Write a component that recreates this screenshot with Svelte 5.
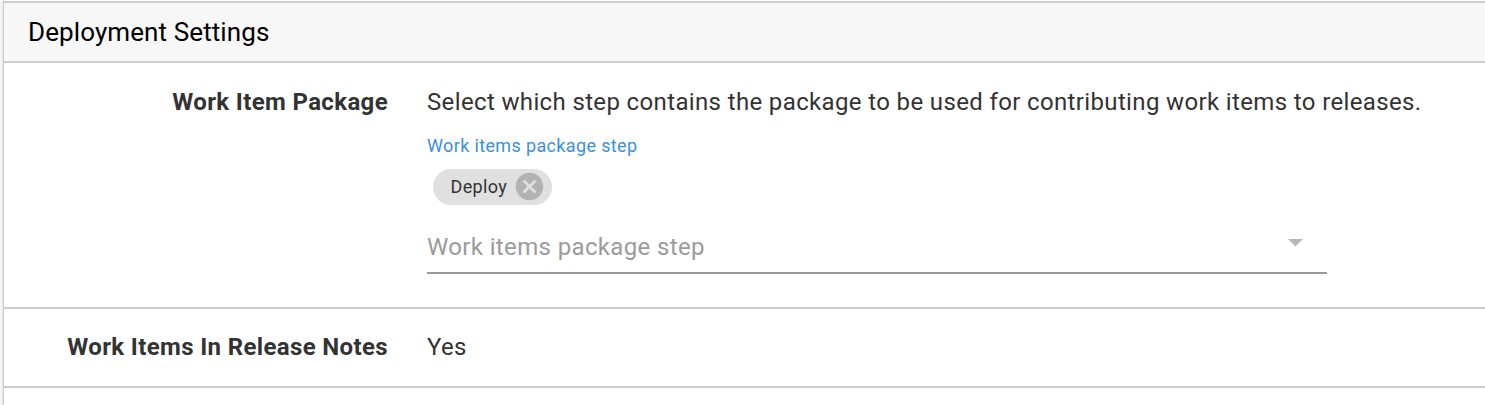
<script>
  let steps = $state(['Deploy']);
</script>

<main class="panel">
  <header>Deployment Settings</header>
  <section class="row package">
    <div class="label"><span>Work Item Package</span></div>
    <div class="content">
      <p class="desc"><span>Select which step contains the package to be used for contributing work items to releases.</span></p>
      <div class="caption"><span>Work items package step</span></div>
      <div class="chips">
        {#each steps as step}
          <div class="chip">
            <span>{step}</span>
            <svg width="33" height="33" viewBox="0 0 24 24"><path d="M12 2C6.47 2 2 6.47 2 12s4.47 10 10 10 10-4.47 10-10S17.53 2 12 2zm5 13.59L15.59 17 12 13.41 8.41 17 7 15.59 10.59 12 7 8.41 8.41 7 12 10.59 15.59 7 17 8.41 13.41 12 17 15.59z" /></svg>
          </div>
        {/each}
      </div>
      <div class="select">
        <span>Work items package step</span>
        <svg width="15" height="8" viewBox="0 0 15 8"><path d="M0 0h15L7.5 7.5z" /></svg>
      </div>
    </div>
  </section>
  <section class="row notes">
    <div class="label"><span>Work Items In Release Notes</span></div>
    <div class="content"><span>Yes</span></div>
  </section>
</main>

<style>
  :global(body) {
    background: linear-gradient(to right, #f8f8f8, #e9e9e9 3px, #fff 3px);
    overflow: hidden;
  }
  .panel {
    box-sizing: border-box;
    height: 405px;
    margin-left: 3px;
    border-left: 1px solid #c8c8c8;
    border-top: 1px solid #fff;
    background: #fff;
    font-family: Roboto, sans-serif;
    color: #333;
    font-size: 24px;
    letter-spacing: 0.36px;
    white-space: nowrap;
  }
  header {
    box-sizing: border-box;
    height: 62px;
    padding-left: 24px;
    border-top: 2px solid #ccc;
    border-bottom: 2px solid #ccc;
    background: #f7f7f7;
    color: #000;
    font-size: 26px;
    line-height: 58px;
    letter-spacing: 0.1px;
  }
  .row {
    box-sizing: border-box;
    display: grid;
    grid-template-columns: 384px 1fr;
    column-gap: 39px;
    border-bottom: 2px solid #ccc;
  }
  .package { height: 246px; padding-top: 23px; }
  .notes { height: 79px; padding-top: 22px; }
  .label { font-weight: 700; text-align: right; line-height: 32px; }
  .content { line-height: 32px; }
  .desc { margin: 0; }
  .caption { height: 24px; margin-top: 16px; line-height: 24px; font-size: 18px; color: #3a8fdd; }
  .chips { display: flex; margin: 11px 0 0 6px; }
  .chip {
    box-sizing: border-box;
    display: flex;
    align-items: center;
    justify-content: space-between;
    width: 119px;
    height: 36px;
    padding: 0 6px 0 17.5px;
    border-radius: 18px;
    background: #e0e0e0;
    font-size: 18px;
  }
  .chip span { margin-top: -1px; }
  .chip svg { flex: none; margin-top: -1px; fill: #b2b2b2; }
  .select {
    box-sizing: border-box;
    display: flex;
    justify-content: space-between;
    width: 900px;
    height: 49px;
    margin-top: 20px;
    padding-top: 6px;
    padding-right: 24px;
    border-bottom: 2px solid #999;
    color: #9b9b9b;
  }
  .select svg { margin-top: 8px; fill: #b8b8b8; }
</style>
